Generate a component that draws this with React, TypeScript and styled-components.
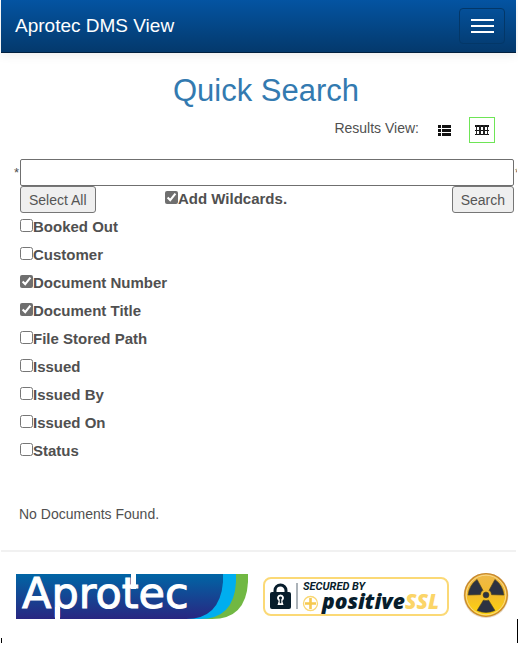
import React, { useState } from "react";
import styled, { createGlobalStyle } from "styled-components";

const GlobalStyle = createGlobalStyle`
  *, *::before, *::after { box-sizing: border-box; }
  body {
    margin: 0;
    background: #fff;
    color: #505050;
    font-family: "Liberation Sans", Arial, sans-serif;
    font-size: 14px;
    line-height: 20px;
  }
  button, input { font-family: inherit; color: inherit; }
`;

const Page = styled.div`
  overflow: hidden;
`;

const NavBar = styled.header`
  display: flex;
  align-items: center;
  justify-content: space-between;
  height: 53px;
  margin: 0 2px 0 1px;
  padding: 0 11px 0 14px;
  background: linear-gradient(#0454a2, #04396c);
  border-bottom: 1px solid #02203f;
  box-shadow: 0 2px 10px rgba(0, 0, 0, 0.08);
`;

const Brand = styled.a`
  color: #fff;
  font-size: 19px;
  text-decoration: none;
`;

const MenuButton = styled.button`
  display: flex;
  flex-direction: column;
  align-items: center;
  justify-content: center;
  gap: 4px;
  width: 46px;
  height: 36px;
  padding: 0;
  background: transparent;
  border: 1px solid #033768;
  border-radius: 4px;
`;

const MenuBar = styled.span`
  width: 23px;
  height: 2px;
  background: #fff;
`;

const Main = styled.main`
  padding: 0 4px 0 14px;
`;

const Title = styled.h1`
  margin: 20px 0 8px;
  padding-left: 4px;
  color: #337ab0;
  font-size: 31px;
  font-weight: 400;
  line-height: 36px;
  text-align: center;
`;

const ViewRow = styled.div`
  display: flex;
  align-items: center;
  justify-content: flex-end;
  gap: 12px;
  margin-right: 19px;
`;

const ViewLabel = styled.span`
  padding-bottom: 4px;
`;

const ViewButton = styled.button<{ $active: boolean }>`
  display: grid;
  place-items: center;
  width: 26px;
  height: 26px;
  padding: 0;
  background: #fff;
  border: 1px solid ${(p) => (p.$active ? "#6ee556" : "transparent")};
`;

const SearchLine = styled.div`
  display: flex;
  align-items: center;
  margin: 16px -8px 0 0;
`;

const Star = styled.span`
  flex: none;
  width: 6px;
  font-size: 13px;
`;

const EndStar = styled(Star)`
  width: 8px;
  padding-left: 1px;
  clip-path: inset(0 5px 0 0);
`;

const SearchInput = styled.input`
  flex: 1;
  min-width: 0;
  height: 27px;
  padding: 0 6px;
  font-size: 14px;
  background: #fff;
  border: 1px solid #6f6f6f;
  border-radius: 2px;
`;

const ActionRow = styled.div`
  display: grid;
  grid-template-columns: 145px 1fr auto;
  align-items: start;
  margin-left: 6px;
`;

const ActionButton = styled.button`
  justify-self: start;
  height: 27px;
  padding: 0 8px;
  color: #555;
  font-size: 14px;
  background: #efefef;
  border: 1px solid #767676;
  border-radius: 3px;
`;

const CheckLabel = styled.label`
  display: flex;
  align-items: flex-start;
  font-size: 15px;
  font-weight: 700;
`;

const WildcardLabel = styled(CheckLabel)`
  padding-top: 3px;
`;

const CheckBox = styled.input`
  width: 13px;
  height: 13px;
  margin: 2px 0 0;
  accent-color: #6f6f6f;
`;

const FieldList = styled.ul`
  display: grid;
  gap: 8px;
  margin: 4px 0 0 6px;
  padding: 0;
  list-style: none;
`;

const Message = styled.p`
  margin: 43px 0 26px 5px;
`;

const Footer = styled.footer`
  display: flex;
  align-items: center;
  justify-content: space-between;
  margin: 0 2px 0 1px;
  padding: 21px 6px 0 15px;
  border-top: 2px solid #f1f1f1;
`;

const Art = styled.svg`
  display: block;
  flex: none;
`;

const EdgeMarks = styled.div`
  display: flex;
  align-items: flex-end;
  justify-content: space-between;
  padding-left: 1px;
`;

const Mark = styled.span<{ $height: number }>`
  width: 1px;
  height: ${(p) => p.$height}px;
  background: #000;
`;

function ListIcon() {
  return (
    <Art width="13" height="11" viewBox="0 0 13 11" fill="#111" aria-hidden="true">
      {[0, 4, 8].map((y) => (
        <g key={y}>
          <rect x="0" y={y} width="3" height="3" />
          <rect x="4" y={y} width="9" height="3" />
        </g>
      ))}
    </Art>
  );
}

function GridIcon() {
  return (
    <Art width="14" height="10" viewBox="0 0 14 10" aria-hidden="true">
      <path d="M0 0H14V2H0ZM0 5H14V6H0ZM0 9H14V10H0Z" fill="#111" />
      <path d="M1 0H2V10H1ZM4 0H6V10H4ZM8 0H10V10H8ZM12 0H13V10H12Z" fill="#222" />
    </Art>
  );
}

function AprotecLogo() {
  return (
    <Art width="233" height="46" viewBox="0 0 233 46" role="img" aria-label="Aprotec">
      <defs>
        <linearGradient id="aprotec-blue" x1="0" y1="0" x2="0" y2="1">
          <stop offset="0" stopColor="#0065a5" />
          <stop offset="1" stopColor="#292681" />
        </linearGradient>
      </defs>
      <path d="M140 1H232V9Q230 46 196 46H140Z" fill="#71b843" />
      <path d="M140 1H220V9Q218 46 184 46H140Z" fill="#00aeef" />
      <path d="M0 1H207V9Q204 46 170 46H0Z" fill="url(#aprotec-blue)" />
      <path d="M115 1H120V16H115ZM39 34H44V46H39Z" fill="#fff" />
      <text
        x="6"
        y="35"
        fill="#fff"
        stroke="#fff"
        strokeWidth="1"
        fontFamily="DejaVu Sans, sans-serif"
        fontSize="43"
      >
        Aprotec
      </text>
    </Art>
  );
}

function SslBadge() {
  return (
    <Art width="186" height="40" viewBox="0 0 186 40" role="img" aria-label="Secured by PositiveSSL">
      <rect x="1" y="2" width="184" height="37" rx="7" fill="#fff" stroke="#fbd976" strokeWidth="2" />
      <path d="M12 17V14.500A5.500 5.500 0 0 1 23 14.500V17" fill="none" stroke="#071d2c" strokeWidth="3" />
      <rect x="7" y="16" width="21" height="17" rx="2" fill="#071d2c" />
      <path d="M17.500 18.500a3.500 3.500 0 0 1 1.800 6.500l1.200 4h-6l1.200-4a3.500 3.500 0 0 1 1.800-6.500Z" fill="#fff" />
      <path d="M17.500 20.500a1.500 1.500 0 0 1 .8 2.800v4h-1.600v-4a1.500 1.500 0 0 1 .8-2.800Z" fill="#071d2c" />
      <path d="M34 7V33" stroke="#596773" strokeWidth="1" />
      <circle cx="47.500" cy="27.500" r="7" fill="none" stroke="#f9d773" strokeWidth="1.300" />
      <path d="M47.500 22V33M42 27.500H53" stroke="#f6c94f" strokeWidth="2.600" />
      <g fontStyle="italic">
        <text x="40" y="14" fill="#071d2c" fontFamily="Roboto, sans-serif" fontSize="11" fontWeight="700">
          SECURED BY
        </text>
        <text x="59" y="33" fill="#071d2c" fontFamily="Open Sans, sans-serif" fontSize="21" fontWeight="800">
          positive
          <tspan fill="#fbd568">SSL</tspan>
        </text>
      </g>
    </Art>
  );
}

function RadiationIcon() {
  return (
    <Art width="48" height="46" viewBox="0 0 48 46" role="img" aria-label="Radiation symbol">
      <defs>
        <linearGradient id="rad-face" x1="0" y1="0" x2="0" y2="1">
          <stop offset="0" stopColor="#eeb94c" />
          <stop offset="0.5" stopColor="#f2bb2b" />
          <stop offset="1" stopColor="#ffd60b" />
        </linearGradient>
      </defs>
      <circle cx="24" cy="22.500" r="22.500" fill="#e6d9c6" />
      <circle cx="24" cy="22" r="21.300" fill="url(#rad-face)" stroke="#c9892c" strokeWidth="1.300" />
      <circle cx="24" cy="22" r="19.800" fill="none" stroke="#f9d98a" strokeWidth="1" />
      <g fill="#2c3242" stroke="#54481f" strokeWidth="0.600">
        <circle cx="24" cy="22" r="3" />
        {[0, 120, 240].map((angle) => (
          <path
            key={angle}
            transform={`rotate(${angle} 24 22)`}
            d="M21.500 27Q24 28.200 26.500 27L33 37.500Q24 41.500 15 37.500Z"
          />
        ))}
      </g>
    </Art>
  );
}

const FIELDS = [
  "Booked Out",
  "Customer",
  "Document Number",
  "Document Title",
  "File Stored Path",
  "Issued",
  "Issued By",
  "Issued On",
  "Status",
];

export default function App() {
  const [view, setView] = useState("grid");
  const [wildcards, setWildcards] = useState(true);
  const [selected, setSelected] = useState(["Document Number", "Document Title"]);

  const toggle = (field: string) =>
    setSelected((list) =>
      list.includes(field) ? list.filter((f) => f !== field) : [...list, field]
    );

  return (
    <Page>
      <GlobalStyle />
      <NavBar>
        <Brand href="#">Aprotec DMS View</Brand>
        <MenuButton type="button" aria-label="Toggle navigation">
          <MenuBar />
          <MenuBar />
          <MenuBar />
        </MenuButton>
      </NavBar>
      <Main>
        <Title>Quick Search</Title>
        <ViewRow>
          <ViewLabel>Results View:</ViewLabel>
          <ViewButton
            type="button"
            aria-label="List view"
            $active={view === "list"}
            onClick={() => setView("list")}
          >
            <ListIcon />
          </ViewButton>
          <ViewButton
            type="button"
            aria-label="Grid view"
            $active={view === "grid"}
            onClick={() => setView("grid")}
          >
            <GridIcon />
          </ViewButton>
        </ViewRow>
        <SearchLine>
          <Star>*</Star>
          <SearchInput type="text" aria-label="Search text" />
          <EndStar>*</EndStar>
        </SearchLine>
        <ActionRow>
          <ActionButton type="button" onClick={() => setSelected(FIELDS)}>
            Select All
          </ActionButton>
          <WildcardLabel>
            <CheckBox
              type="checkbox"
              checked={wildcards}
              onChange={() => setWildcards(!wildcards)}
            />
            Add Wildcards.
          </WildcardLabel>
          <ActionButton type="button">Search</ActionButton>
        </ActionRow>
        <FieldList>
          {FIELDS.map((field) => (
            <li key={field}>
              <CheckLabel>
                <CheckBox
                  type="checkbox"
                  checked={selected.includes(field)}
                  onChange={() => toggle(field)}
                />
                {field}
              </CheckLabel>
            </li>
          ))}
        </FieldList>
        <Message>No Documents Found.</Message>
      </Main>
      <Footer>
        <AprotecLogo />
        <SslBadge />
        <RadiationIcon />
      </Footer>
      <EdgeMarks>
        <Mark $height={5} />
        <Mark $height={24} />
      </EdgeMarks>
    </Page>
  );
}
